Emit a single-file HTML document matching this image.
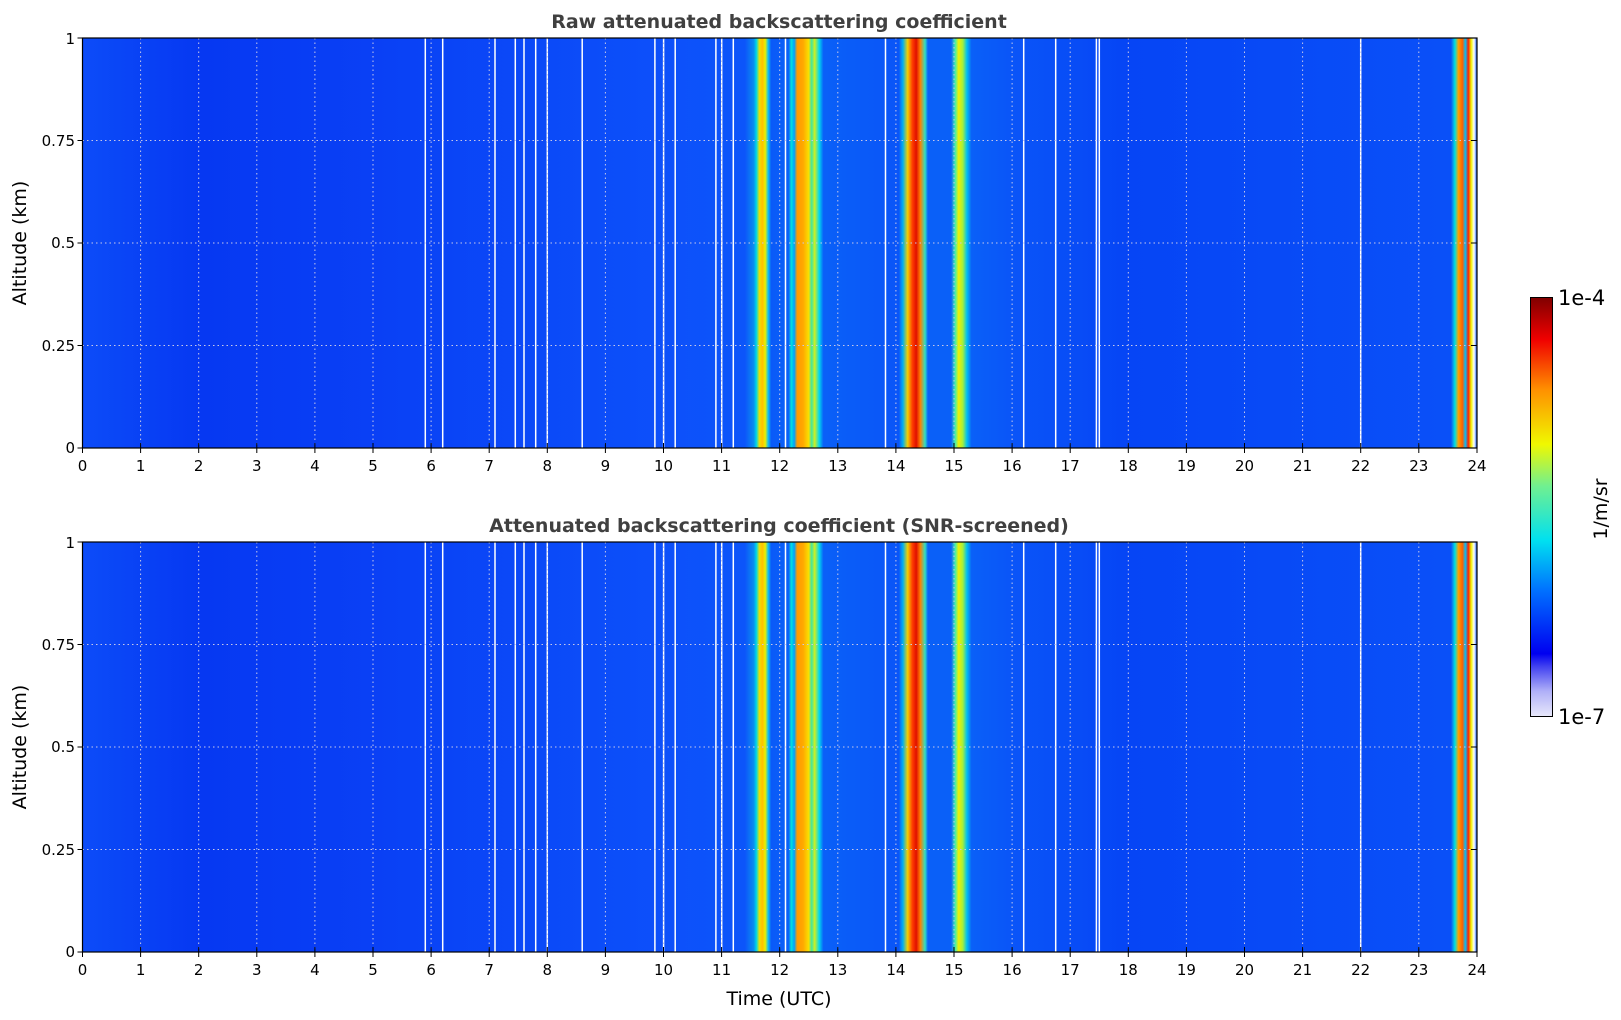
<!DOCTYPE html>
<html><head><meta charset="utf-8"><style>
html,body{margin:0;padding:0;background:#fff;}
svg{display:block;font-family:"DejaVu Sans","Liberation Sans",sans-serif;}
</style></head><body>
<svg width="1621" height="1020" viewBox="0 0 1621 1020" xmlns="http://www.w3.org/2000/svg">
<defs>
<linearGradient id="bg" gradientUnits="userSpaceOnUse" x1="82.5" y1="0" x2="1477" y2="0">
<stop offset="0" stop-color="#0c4cf8"/>
<stop offset="0.0833" stop-color="#0638f2"/>
<stop offset="0.2083" stop-color="#0a40f5"/>
<stop offset="0.3333" stop-color="#0b4af8"/>
<stop offset="0.4167" stop-color="#0d50fa"/>
<stop offset="0.475" stop-color="#0c55fa"/>
<stop offset="0.4813" stop-color="#0a8cf0"/>
<stop offset="0.4833" stop-color="#00d8e8"/>
<stop offset="0.4854" stop-color="#f0e000"/>
<stop offset="0.4875" stop-color="#ffc000"/>
<stop offset="0.4896" stop-color="#e8f000"/>
<stop offset="0.4917" stop-color="#10c0f0"/>
<stop offset="0.4938" stop-color="#0a5af8"/>
<stop offset="0.5063" stop-color="#0a60f8"/>
<stop offset="0.5083" stop-color="#00e0e0"/>
<stop offset="0.5104" stop-color="#00a0ff"/>
<stop offset="0.5125" stop-color="#ff9a00"/>
<stop offset="0.5167" stop-color="#ffa800"/>
<stop offset="0.5208" stop-color="#f8e000"/>
<stop offset="0.5229" stop-color="#40e8a0"/>
<stop offset="0.525" stop-color="#d0f020"/>
<stop offset="0.5283" stop-color="#00d8f0"/>
<stop offset="0.5313" stop-color="#0a60f8"/>
<stop offset="0.5854" stop-color="#0a55f8"/>
<stop offset="0.5883" stop-color="#00b0f0"/>
<stop offset="0.5917" stop-color="#f0d000"/>
<stop offset="0.595" stop-color="#ff4000"/>
<stop offset="0.5979" stop-color="#e01000"/>
<stop offset="0.6008" stop-color="#ff8000"/>
<stop offset="0.6042" stop-color="#30e0c0"/>
<stop offset="0.6063" stop-color="#0a60f8"/>
<stop offset="0.6229" stop-color="#0a60f8"/>
<stop offset="0.6258" stop-color="#40f0b0"/>
<stop offset="0.6283" stop-color="#f0f000"/>
<stop offset="0.6313" stop-color="#a0f040"/>
<stop offset="0.6342" stop-color="#00c0f0"/>
<stop offset="0.6375" stop-color="#0a60f8"/>
<stop offset="0.6667" stop-color="#0a55f8"/>
<stop offset="0.75" stop-color="#0645f5"/>
<stop offset="0.9813" stop-color="#0a50f8"/>
<stop offset="0.9842" stop-color="#00e0e0"/>
<stop offset="0.9867" stop-color="#ffa000"/>
<stop offset="0.9896" stop-color="#ff6000"/>
<stop offset="0.9917" stop-color="#00c0ff"/>
<stop offset="0.9938" stop-color="#ff2000"/>
<stop offset="0.9958" stop-color="#f0f000"/>
<stop offset="0.9979" stop-color="#ffffff"/>
<stop offset="1" stop-color="#0a50f8"/>
</linearGradient>
<linearGradient id="cb" x1="0" y1="1" x2="0" y2="0">
<stop offset="0" stop-color="#e8e8fa"/>
<stop offset="0.06" stop-color="#b0b0f8"/>
<stop offset="0.12" stop-color="#4040f0"/>
<stop offset="0.15" stop-color="#0000f0"/>
<stop offset="0.3" stop-color="#0070ff"/>
<stop offset="0.42" stop-color="#00e0f0"/>
<stop offset="0.55" stop-color="#70f090"/>
<stop offset="0.65" stop-color="#f0f800"/>
<stop offset="0.78" stop-color="#ff9000"/>
<stop offset="0.9" stop-color="#f00000"/>
<stop offset="1" stop-color="#800000"/>
</linearGradient>
<g id="lines" stroke="#fff" stroke-width="1.5">
<line x1="425.3" y1="0" x2="425.3" y2="410"/><line x1="442.7" y1="0" x2="442.7" y2="410"/>
<line x1="495" y1="0" x2="495" y2="410"/><line x1="515.3" y1="0" x2="515.3" y2="410"/>
<line x1="524" y1="0" x2="524" y2="410"/><line x1="535.7" y1="0" x2="535.7" y2="410"/>
<line x1="547.3" y1="0" x2="547.3" y2="410"/><line x1="582.2" y1="0" x2="582.2" y2="410"/>
<line x1="654.9" y1="0" x2="654.9" y2="410"/><line x1="663.6" y1="0" x2="663.6" y2="410"/>
<line x1="675.2" y1="0" x2="675.2" y2="410"/><line x1="715.9" y1="0" x2="715.9" y2="410"/>
<line x1="721.7" y1="0" x2="721.7" y2="410"/><line x1="733.3" y1="0" x2="733.3" y2="410"/>
<line x1="785.5" y1="0" x2="785.5" y2="410"/><line x1="885.5" y1="0" x2="885.5" y2="410"/>
<line x1="1023.7" y1="0" x2="1023.7" y2="410"/><line x1="1055.7" y1="0" x2="1055.7" y2="410"/>
<line x1="1096.4" y1="0" x2="1096.4" y2="410"/><line x1="1099.3" y1="0" x2="1099.3" y2="410"/>
<line x1="1360.7" y1="0" x2="1360.7" y2="410"/>
</g>
<g id="grid" stroke="#c8c8e8" stroke-width="1" stroke-dasharray="1.5,3" fill="none">
<path d="M140.6 0V410M198.7 0V410M256.8 0V410M314.9 0V410M373 0V410M431.1 0V410M489.2 0V410M547.3 0V410M605.4 0V410M663.5 0V410M721.6 0V410M779.7 0V410M837.8 0V410M895.9 0V410M954 0V410M1012.1 0V410M1070.2 0V410M1128.3 0V410M1186.4 0V410M1244.5 0V410M1302.6 0V410M1360.7 0V410M1418.8 0V410"/>
<path d="M82.5 102.5H1477M82.5 205H1477M82.5 307.5H1477"/>
</g>
<g id="ticks" stroke="#000" stroke-width="1">
<path d="M82.5 410v-5M140.6 410v-5M198.7 410v-5M256.8 410v-5M314.9 410v-5M373 410v-5M431.1 410v-5M489.2 410v-5M547.3 410v-5M605.4 410v-5M663.5 410v-5M721.6 410v-5M779.7 410v-5M837.8 410v-5M895.9 410v-5M954 410v-5M1012.1 410v-5M1070.2 410v-5M1128.3 410v-5M1186.4 410v-5M1244.5 410v-5M1302.6 410v-5M1360.7 410v-5M1418.8 410v-5M1477 410v-5"/>
<path d="M82.5 410v5M140.6 410v5M198.7 410v5M256.8 410v5M314.9 410v5M373 410v5M431.1 410v5M489.2 410v5M547.3 410v5M605.4 410v5M663.5 410v5M721.6 410v5M779.7 410v5M837.8 410v5M895.9 410v5M954 410v5M1012.1 410v5M1070.2 410v5M1128.3 410v5M1186.4 410v5M1244.5 410v5M1302.6 410v5M1360.7 410v5M1418.8 410v5M1477 410v5"/>
<path d="M1477 102.5h-6M1477 205h-6M1477 307.5h-6M82.5 102.5h-5M82.5 205h-5M82.5 307.5h-5M82.5 0h-5M82.5 410h-5"/>
</g>
<g id="xl" font-size="15" text-anchor="middle" fill="#000">
<text x="82.5" y="433">0</text><text x="140.6" y="433">1</text><text x="198.7" y="433">2</text><text x="256.8" y="433">3</text><text x="314.9" y="433">4</text><text x="373" y="433">5</text><text x="431.1" y="433">6</text><text x="489.2" y="433">7</text><text x="547.3" y="433">8</text><text x="605.4" y="433">9</text><text x="663.5" y="433">10</text><text x="721.6" y="433">11</text><text x="779.7" y="433">12</text><text x="837.8" y="433">13</text><text x="895.9" y="433">14</text><text x="954" y="433">15</text><text x="1012.1" y="433">16</text><text x="1070.2" y="433">17</text><text x="1128.3" y="433">18</text><text x="1186.4" y="433">19</text><text x="1244.5" y="433">20</text><text x="1302.6" y="433">21</text><text x="1360.7" y="433">22</text><text x="1418.8" y="433">23</text><text x="1477" y="433">24</text>
</g>
<g id="yl" font-size="15" text-anchor="end" fill="#000">
<text x="75" y="6">1</text><text x="75" y="108">0.75</text><text x="75" y="210">0.5</text><text x="75" y="313">0.25</text><text x="75" y="415">0</text>
</g>
</defs>

<g transform="translate(0,38)">
<rect x="82.5" y="0" width="1394.5" height="410" fill="url(#bg)"/>
<use href="#lines"/><use href="#grid"/>
<rect x="82.5" y="0" width="1394.5" height="410" fill="none" stroke="#000" stroke-width="1.2"/>
<use href="#ticks"/><use href="#xl"/><use href="#yl"/>
</g>
<text x="779" y="28" font-size="19" font-weight="bold" fill="#404040" text-anchor="middle">Raw attenuated backscattering coefficient</text>
<text transform="translate(26,243) rotate(-90)" font-size="19" text-anchor="middle" fill="#000">Altitude (km)</text>

<g transform="translate(0,542)">
<rect x="82.5" y="0" width="1394.5" height="410" fill="url(#bg)"/>
<use href="#lines"/><use href="#grid"/>
<rect x="82.5" y="0" width="1394.5" height="410" fill="none" stroke="#000" stroke-width="1.2"/>
<use href="#ticks"/><use href="#xl"/><use href="#yl"/>
</g>
<text x="779" y="532" font-size="19" font-weight="bold" fill="#404040" text-anchor="middle">Attenuated backscattering coefficient (SNR-screened)</text>
<text transform="translate(26,747) rotate(-90)" font-size="19" text-anchor="middle" fill="#000">Altitude (km)</text>
<text x="779" y="1005" font-size="19" text-anchor="middle" fill="#000">Time (UTC)</text>

<rect x="1530.5" y="297.5" width="22" height="419" fill="url(#cb)" stroke="#000" stroke-width="1"/>
<text x="1558" y="305" font-size="21" fill="#000">1e-4</text>
<text x="1558" y="724" font-size="21" fill="#000">1e-7</text>
<text transform="translate(1607,509) rotate(-90)" font-size="19" text-anchor="middle" fill="#000">1/m/sr</text>
</svg>
</body></html>
